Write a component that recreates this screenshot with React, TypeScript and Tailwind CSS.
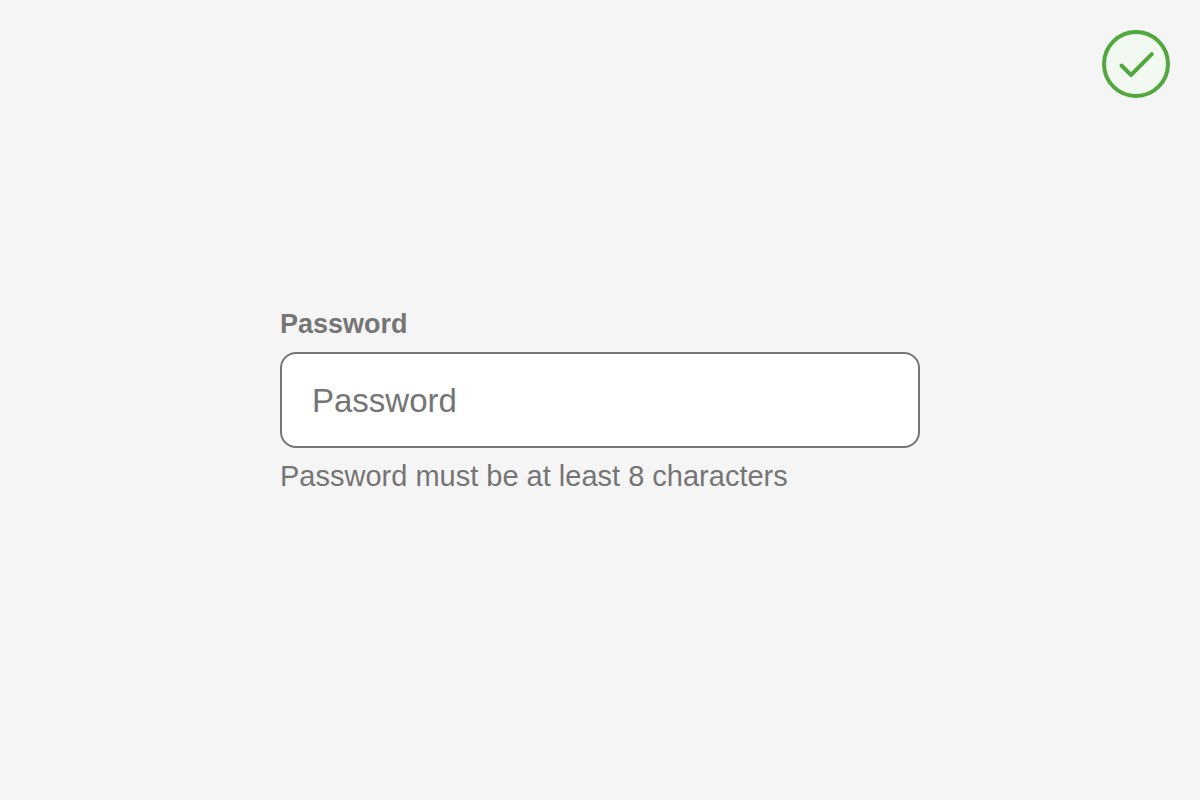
import React from 'react';

function StatusBadge() {
  return (
    <div className="absolute top-[30px] right-[30px]">
      <svg
        className="size-[68px]"
        viewBox="0 0 68 68"
        fill="none"
        stroke="#52a73f"
        strokeWidth="4"
        strokeLinecap="round"
        strokeLinejoin="round"
        role="img"
        aria-label="Passed"
      >
        <circle cx="34" cy="34" r="32" fill="#f1f9f1" />
        <path d="M19.5 35.5 29 45 49.8 24.2" />
      </svg>
    </div>
  );
}

interface PasswordFieldProps {
  id: string;
  label: string;
  hint: string;
}

function PasswordField({ id, label, hint }: PasswordFieldProps) {
  return (
    <div className="flex w-full max-w-[640px] flex-col gap-3 text-[#757575]">
      <label htmlFor={id} className="text-[27px] leading-8 font-bold">
        {label}
      </label>
      <input
        id={id}
        type="password"
        placeholder={label}
        aria-describedby={`${id}-hint`}
        className="h-24 w-full rounded-2xl border-2 border-[#757575] bg-white px-[30px] pt-0.5 text-[33px] text-[#757575] placeholder:text-[#757575]"
      />
      <p id={`${id}-hint`} className="text-[29px] leading-8">
        {hint}
      </p>
    </div>
  );
}

export default function App() {
  return (
    <main className="relative flex min-h-screen items-center justify-center bg-[#f5f5f5] font-['Liberation_Sans',Arial,sans-serif]">
      <StatusBadge />
      <PasswordField
        id="password"
        label="Password"
        hint="Password must be at least 8 characters"
      />
    </main>
  );
}
